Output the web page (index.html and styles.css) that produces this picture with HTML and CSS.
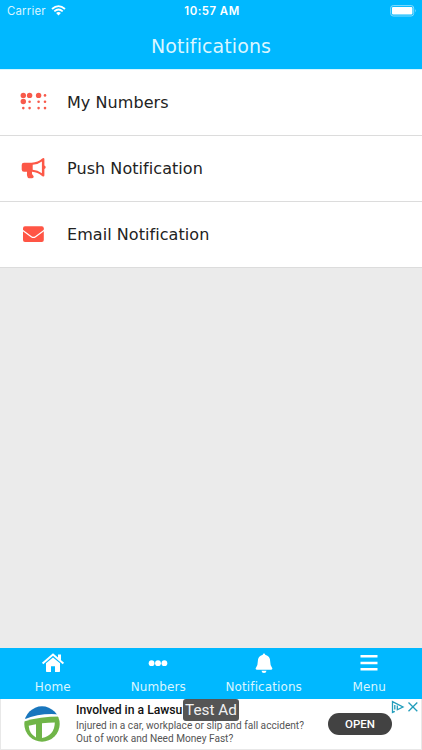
FILE: index.html
```html
<!DOCTYPE html>
<html lang="en">
<head>
<meta charset="utf-8">
<title>Notifications</title>
<link rel="stylesheet" href="styles.css">
</head>
<body>
<div class="app">
  <header class="header">
    <div class="status">
      <div class="carrier"><span>Carrier</span>
        <svg width="15" height="11" viewBox="0 0 15 11" fill="none" stroke="#fff" stroke-width="1.8"><path d="M1 4Q7.5-1.8 14 4M3.3 6.4Q7.5 2.6 11.7 6.4"/><path d="M5.1 8.1Q7.5 6.1 9.9 8.1L7.5 10.5Z" fill="#fff" stroke="none"/></svg>
      </div>
      <span class="time">10:57 AM</span>
      <svg class="battery" width="27" height="12" viewBox="0 0 27 12"><rect x=".7" y=".6" width="23" height="10.4" rx="2.5" fill="none" stroke="#85dcff"/><rect x="2" y="2" width="20.4" height="7.6" rx="1" fill="#fff"/><path d="M25 4q1.6 1.8 0 3.6z" fill="#85dcff"/></svg>
    </div>
    <h1 class="title">Notifications</h1>
  </header>
  <main class="list">
    <div class="row">
      <svg class="icon" width="30" height="24" viewBox="0 0 30 24" fill="#f85a4b"><circle cx="5.3" cy="5.4" r="2.7"/><circle cx="11.6" cy="5.4" r="2.7"/><circle cx="20.6" cy="5.4" r="2.7"/><circle cx="27" cy="5.4" r="1.3"/><circle cx="5.3" cy="11.5" r="2.7"/><circle cx="11.6" cy="11.7" r="1.3"/><circle cx="20.6" cy="11.7" r="1.3"/><circle cx="27" cy="11.7" r="1.3"/><circle cx="5.3" cy="18.1" r="1.3"/><circle cx="11.6" cy="18.1" r="1.3"/><circle cx="20.6" cy="18.1" r="1.3"/><circle cx="27" cy="18.1" r="1.3"/></svg>
      <span>My Numbers</span>
    </div>
    <div class="row">
      <svg class="icon" width="30" height="24" viewBox="0 0 30 24" fill="#fc5847"><path fill-rule="evenodd" d="M6 5.700h7.500C18 5.500 21.500 3.900 24.200 1.500Q26.300.2 26.400 2.200v6.300q1.300.5 1.300 1.800t-1.300 1.800v6.100q-.2 2-2.300.7C21 16.400 18 15 14 14.800q-.5 2.400 1.100 3.800.8.700.5 1.600-.3 1-1.800 1H11q-1 0-1.400-1-1-2.600-.6-5.400H6q-2.300 0-2.300-2.200V8Q3.700 5.700 6 5.700ZM14.700 7.800v5q5 .3 9.200 3.400V4.400q-4.200 3.100-9.200 3.400Z"/></svg>
      <span>Push Notification</span>
    </div>
    <div class="row">
      <svg class="icon" width="30" height="24" viewBox="0 0 30 24"><rect x="5" y="3.200" width="20.800" height="15.800" rx="2" fill="#ff5545"/><path d="M4.500 7.300 13.300 13.700q2.100 1.500 4.200 0L26.300 7.300" fill="none" stroke="#fff" stroke-width="1.200"/></svg>
      <span>Email Notification</span>
    </div>
  </main>
  <nav class="tabs">
    <div class="tab"><svg width="24" height="22" viewBox="0 0 24 22"><path d="M1.600 11.500 12 2.600l10.400 8.900" fill="none" stroke="#fff" stroke-width="2"/><path d="M17 2.500h3v6l-3-2.600ZM5 11.300 12 5.500l7 5.800v7.900q0 .8-.8.800H14v-5.800h-4V20H5.800q-.8 0-.8-.8Z" fill="#fff"/></svg><span>Home</span></div>
    <div class="tab"><svg width="24" height="22" viewBox="0 0 24 22" fill="#fff"><circle cx="5.600" cy="11.200" r="2.900"/><circle cx="12" cy="11.200" r="2.900"/><circle cx="18.400" cy="11.200" r="2.900"/></svg><span>Numbers</span></div>
    <div class="tab"><svg width="24" height="22" viewBox="0 0 24 22" fill="#fff"><path d="M12 1.500q1.200 0 1.200 1.300 5 1.200 5 6.800 0 4.100 1.700 5.800.7.800.4 1.600-.3.700-1.200.7H4.900q-.9 0-1.200-.7-.3-.8.4-1.600 1.700-1.700 1.700-5.800 0-5.600 5-6.800 0-1.300 1.200-1.300ZM9.500 18.700h5q-.2 2.400-2.500 2.400t-2.500-2.400Z"/></svg><span>Notifications</span></div>
    <div class="tab"><svg width="24" height="22" viewBox="0 0 24 22" fill="#fff"><path d="M3.500 3h17v2.500h-17zM3.500 9.700h17v2.500h-17zM3.500 16.100h17v2.500h-17z"/></svg><span>Menu</span></div>
  </nav>
  <aside class="ad">
    <svg class="logo" width="36" height="38" viewBox="0 0 36 38"><defs><clipPath id="disc"><circle cx="18" cy="19" r="17.700"/></clipPath></defs><g clip-path="url(#disc)"><path d="M0 0h36v9.500Q17 7.500 0 14.500Z" fill="#1876bd"/><path d="M0 16.500Q16 11.500 36 11.500v27H0Z" fill="#70b548"/><path d="M4.700 20.800q3.300-1 7.300-1.600v13.200Q5.300 29 4.700 20.800ZM18 18.300q6.500-.8 12.800-.8 0 12.500-12.800 15.600Z" fill="#fff"/></g></svg>
    <div class="copy"><strong>Involved in a Lawsu</strong><span>Injured in a car, workplace or slip and fall accident?</span><span>Out of work and Need Money Fast?</span></div>
    <span class="open">OPEN</span>
    <span class="test">Test Ad</span>
    <svg class="choices" width="28" height="14" viewBox="0 0 28 14" fill="none" stroke="#229dbb" stroke-width="1.300"><path d="M3.800 11.300 1.500 12.400V1.600L12 7 6.300 9.800V5.500M3.800 5v4.500M17.500 2.500l8.800 8.800M26.300 2.500l-8.800 8.800"/></svg>
  </aside>
</div>
</body>
</html>
```
FILE: styles.css
```css
* { box-sizing: border-box; }
body { margin: 0; font-family: "DejaVu Sans", sans-serif; }
.app { width: 422px; height: 750px; display: flex; flex-direction: column; background: #ebebeb; overflow: hidden; }
.header { height: 70px; border-bottom: 1px solid #d5f6ff; background: #00b8ff; color: #fff; flex: none; }
.status { height: 22px; padding: 0 5px 0 7px; display: grid; grid-template-columns: 1fr auto 1fr; align-items: center; font: 11.4px/22px Inter, sans-serif; }
.carrier { display: flex; align-items: center; gap: 5px; color: #d9f5ff; letter-spacing: .2px; }
.carrier svg { margin-top: -1px; }
.time { font-weight: 600; letter-spacing: .5px; }
.battery { justify-self: end; }
.title { margin: 0; text-align: center; font-size: 19px; line-height: 49px; font-weight: 400; letter-spacing: .1px; color: #d9f6ff; }
.list { flex: 1; }
.row { height: 66px; padding-left: 18px; display: flex; align-items: center; background: #fff; border-bottom: 1px solid #dcdcdc; font-size: 16px; letter-spacing: .06px; color: #222; }
.icon { width: 30px; margin-right: 19px; }
.row:first-child .icon { margin-top: -2px; }
.tabs { height: 51px; flex: none; display: grid; grid-template-columns: repeat(4, 1fr); background: #00b8ff; }
.tab { display: flex; flex-direction: column; align-items: center; padding-top: 4px; color: #d9f6ff; font-size: 12px; letter-spacing: .1px; }
.tab span { line-height: 16px; margin-top: 5px; }
.ad { height: 51px; flex: none; position: relative; display: flex; background: #fff; border: 1px solid #e8e8e8; border-top: 0; font-family: Roboto, sans-serif; }
.logo { margin: 6px 16px 0 23px; }
.copy { width: 252px; display: flex; flex-direction: column; color: #555; font-size: 10.15px; line-height: 13px; white-space: nowrap; padding-top: 3px; }
.copy strong { width: 107px; overflow: hidden; color: #111; font-size: 12.2px; font-weight: 500; line-height: 17px; }
.open { width: 64px; height: 22px; margin-top: 14px; border-radius: 11px; background: #424242; color: #fff; font-size: 11.5px; line-height: 22px; font-weight: 500; text-align: center; }
.test { position: absolute; left: 182px; top: 0; width: 56px; height: 22px; border-radius: 3px; background: #555; color: #f1f1f1; font-size: 15.3px; line-height: 22px; text-align: center; white-space: nowrap; }
.choices { position: absolute; right: 2px; top: 1px; }
```
